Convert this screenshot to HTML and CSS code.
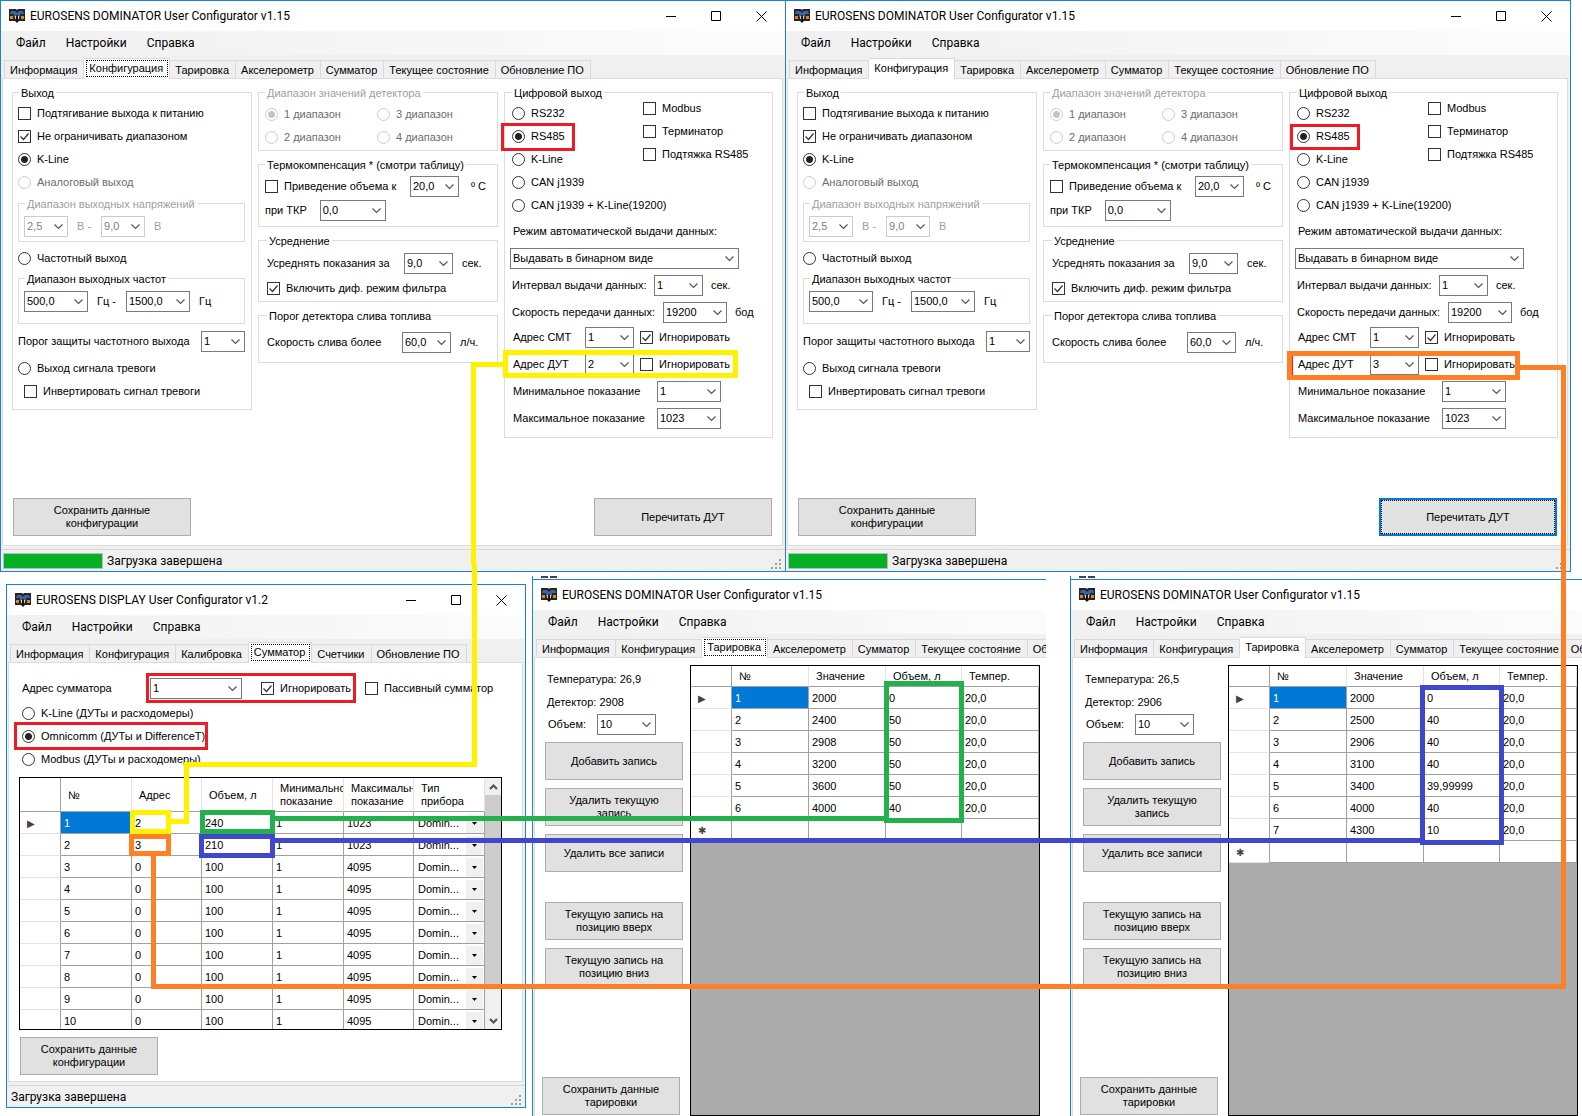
FILE: index.html
```html
<!DOCTYPE html>
<html lang="ru">
<head>
<meta charset="utf-8">
<title>EUROSENS User Configurator</title>
<link rel="stylesheet" href="styles.css">
</head>
<body>
<svg class="defs" aria-hidden="true">
  <symbol id="app" viewBox="0 0 16 14">
    <path d="M0 0h7l1 1 1-1h7v12h-6l-2 2-2-2H0z" fill="#2b2224"/>
    <path d="M2 2h4l2 2 2-2h4l1 3h-4v3H9V6H7v2H5V5H1z" fill="#3569a5"/>
    <path d="M1 7h3v3H1zM12 7h3v3h-3z" fill="#d8852f"/>
    <path d="M6 7h1v3H6zM9 7h1v3H9z" fill="#e8cfa4"/>
    <path d="M7 8h2v5H7z" fill="#17121a"/>
  </symbol>
  <symbol id="min" viewBox="0 0 11 11"><path d="M0 5.500h10" stroke="#000"/></symbol>
  <symbol id="max" viewBox="0 0 11 11"><path d="M.5.5h9v9h-9z" fill="none" stroke="#000"/></symbol>
  <symbol id="close" viewBox="0 0 11 11"><path d="M.5.5l10 10M10.500.5l-10 10" stroke="#000"/></symbol>
  <symbol id="grip" viewBox="0 0 11 11"><path d="M8 0h2v2H8zM8 4h2v2H8zM4 4h2v2H4zM8 8h2v2H8zM4 8h2v2H4zM0 8h2v2H0z" fill="#a0a0a0"/></symbol>
</svg>

<main class="desktop">

<section class="window win-a">
  <header class="title"><svg class="app-icon"><use href="#app"/></svg><h1>EUROSENS DOMINATOR User Configurator v1.15</h1>
    <div class="controls"><button aria-label="Свернуть"><svg><use href="#min"/></svg></button><button aria-label="Развернуть"><svg><use href="#max"/></svg></button><button aria-label="Закрыть"><svg><use href="#close"/></svg></button></div></header>
  <nav class="menu"><button>Файл</button><button>Настройки</button><button>Справка</button></nav>
  <div class="tabs" role="tablist"><button role="tab">Информация</button><button role="tab" class="active focus">Конфигурация</button><button role="tab">Тарировка</button><button role="tab">Акселерометр</button><button role="tab">Сумматор</button><button role="tab">Текущее состояние</button><button role="tab">Обновление ПО</button></div>
  <div class="panel config">
    <div class="columns">
      <fieldset class="output"><legend>Выход</legend>
        <label class="row"><input type="checkbox">Подтягивание выхода к питанию</label>
        <label class="row"><input type="checkbox" checked>Не ограничивать диапазоном</label>
        <label class="row"><input type="radio" name="a-out" checked>K-Line</label>
        <label class="row dim"><input type="radio" name="a-out" disabled>Аналоговый выход</label>
        <fieldset class="volts" disabled><legend>Диапазон выходных напряжений</legend>
          <label><select class="w44"><option>2,5</option></select>В -</label><label><select class="w44"><option>9,0</option></select>В</label></fieldset>
        <label class="row freq-row"><input type="radio" name="a-out">Частотный выход</label>
        <fieldset class="freqs"><legend>Диапазон выходных частот</legend>
          <label><select class="w64"><option>500,0</option></select>Гц -</label><label><select class="w64"><option>1500,0</option></select>Гц</label></fieldset>
        <label class="field spread"><span>Порог защиты частотного выхода</span><select class="w44"><option>1</option></select></label>
        <label class="row alarm"><input type="radio" name="a-out">Выход сигнала тревоги</label>
        <label class="row indent"><input type="checkbox">Инвертировать сигнал тревоги</label>
      </fieldset>
      <div class="middle">
        <fieldset class="ranges" disabled><legend>Диапазон значений детектора</legend>
          <label class="row"><input type="radio" name="a-range" checked>1 диапазон</label><label class="row"><input type="radio" name="a-range">3 диапазон</label>
          <label class="row"><input type="radio" name="a-range">2 диапазон</label><label class="row"><input type="radio" name="a-range">4 диапазон</label></fieldset>
        <fieldset class="thermo"><legend>Термокомпенсация * (смотри таблицу)</legend>
          <div class="field"><label class="row lead"><input type="checkbox">Приведение объема к</label><label class="unit"><select class="w48"><option>20,0</option></select>º C</label></div>
          <label class="field tkr"><span>при ТКР</span><select class="w66"><option>0,0</option></select></label></fieldset>
        <fieldset class="average"><legend>Усреднение</legend>
          <label class="field unit"><span>Усреднять показания за</span><select class="w48"><option>9,0</option></select>сек.</label>
          <label class="row"><input type="checkbox" checked>Включить диф. режим фильтра</label></fieldset>
        <fieldset class="drain"><legend>Порог детектора слива топлива</legend>
          <label class="field unit"><span>Скорость слива более</span><select class="w48"><option>60,0</option></select>л/ч.</label></fieldset>
      </div>
      <fieldset class="digital"><legend>Цифровой выход</legend>
        <div class="modes">
          <div class="radios"><label class="row"><input type="radio" name="a-dig">RS232</label><label class="row"><input type="radio" name="a-dig" checked>RS485</label><label class="row"><input type="radio" name="a-dig">K-Line</label><label class="row"><input type="radio" name="a-dig">CAN j1939</label><label class="row"><input type="radio" name="a-dig">CAN j1939 + K-Line(19200)</label></div>
          <div class="checks"><label class="row"><input type="checkbox">Modbus</label><label class="row"><input type="checkbox">Терминатор</label><label class="row"><input type="checkbox">Подтяжка RS485</label></div>
        </div>
        <label class="mode"><span>Режим автоматической выдачи данных:</span><select><option>Выдавать в бинарном виде</option></select></label>
        <label class="field c142"><span>Интервал выдачи данных:</span><select class="w48"><option>1</option></select>сек.</label>
        <label class="field c150"><span>Скорость передачи данных:</span><select class="w64"><option>19200</option></select>бод</label>
        <div class="field c72 smt"><label><span>Адрес СМТ</span><select class="w48"><option>1</option></select></label><label class="row"><input type="checkbox" checked>Игнорировать</label></div>
        <div class="field c72"><label><span>Адрес ДУТ</span><select class="w48"><option>2</option></select></label><label class="row"><input type="checkbox">Игнорировать</label></div>
        <label class="field c144"><span>Минимальное показание</span><select class="w64"><option>1</option></select></label>
        <label class="field c144"><span>Максимальное показание</span><select class="w64"><option>1023</option></select></label>
      </fieldset>
    </div>
    <div class="actions"><button class="btn wide">Сохранить данные<br>конфигурации</button><button class="btn wide">Перечитать ДУТ</button></div>
  </div>
  <footer class="status"><progress value="100" max="100" aria-label="Загрузка"></progress><span>Загрузка завершена</span><svg class="grip"><use href="#grip"/></svg></footer>
</section>

<section class="window win-b">
  <header class="title"><svg class="app-icon"><use href="#app"/></svg><h1>EUROSENS DOMINATOR User Configurator v1.15</h1>
    <div class="controls"><button aria-label="Свернуть"><svg><use href="#min"/></svg></button><button aria-label="Развернуть"><svg><use href="#max"/></svg></button><button aria-label="Закрыть"><svg><use href="#close"/></svg></button></div></header>
  <nav class="menu"><button>Файл</button><button>Настройки</button><button>Справка</button></nav>
  <div class="tabs" role="tablist"><button role="tab">Информация</button><button role="tab" class="active">Конфигурация</button><button role="tab">Тарировка</button><button role="tab">Акселерометр</button><button role="tab">Сумматор</button><button role="tab">Текущее состояние</button><button role="tab">Обновление ПО</button></div>
  <div class="panel config">
    <div class="columns">
      <fieldset class="output"><legend>Выход</legend>
        <label class="row"><input type="checkbox">Подтягивание выхода к питанию</label>
        <label class="row"><input type="checkbox" checked>Не ограничивать диапазоном</label>
        <label class="row"><input type="radio" name="b-out" checked>K-Line</label>
        <label class="row dim"><input type="radio" name="b-out" disabled>Аналоговый выход</label>
        <fieldset class="volts" disabled><legend>Диапазон выходных напряжений</legend>
          <label><select class="w44"><option>2,5</option></select>В -</label><label><select class="w44"><option>9,0</option></select>В</label></fieldset>
        <label class="row freq-row"><input type="radio" name="b-out">Частотный выход</label>
        <fieldset class="freqs"><legend>Диапазон выходных частот</legend>
          <label><select class="w64"><option>500,0</option></select>Гц -</label><label><select class="w64"><option>1500,0</option></select>Гц</label></fieldset>
        <label class="field spread"><span>Порог защиты частотного выхода</span><select class="w44"><option>1</option></select></label>
        <label class="row alarm"><input type="radio" name="b-out">Выход сигнала тревоги</label>
        <label class="row indent"><input type="checkbox">Инвертировать сигнал тревоги</label>
      </fieldset>
      <div class="middle">
        <fieldset class="ranges" disabled><legend>Диапазон значений детектора</legend>
          <label class="row"><input type="radio" name="b-range" checked>1 диапазон</label><label class="row"><input type="radio" name="b-range">3 диапазон</label>
          <label class="row"><input type="radio" name="b-range">2 диапазон</label><label class="row"><input type="radio" name="b-range">4 диапазон</label></fieldset>
        <fieldset class="thermo"><legend>Термокомпенсация * (смотри таблицу)</legend>
          <div class="field"><label class="row lead"><input type="checkbox">Приведение объема к</label><label class="unit"><select class="w48"><option>20,0</option></select>º C</label></div>
          <label class="field tkr"><span>при ТКР</span><select class="w66"><option>0,0</option></select></label></fieldset>
        <fieldset class="average"><legend>Усреднение</legend>
          <label class="field unit"><span>Усреднять показания за</span><select class="w48"><option>9,0</option></select>сек.</label>
          <label class="row"><input type="checkbox" checked>Включить диф. режим фильтра</label></fieldset>
        <fieldset class="drain"><legend>Порог детектора слива топлива</legend>
          <label class="field unit"><span>Скорость слива более</span><select class="w48"><option>60,0</option></select>л/ч.</label></fieldset>
      </div>
      <fieldset class="digital"><legend>Цифровой выход</legend>
        <div class="modes">
          <div class="radios"><label class="row"><input type="radio" name="b-dig">RS232</label><label class="row"><input type="radio" name="b-dig" checked>RS485</label><label class="row"><input type="radio" name="b-dig">K-Line</label><label class="row"><input type="radio" name="b-dig">CAN j1939</label><label class="row"><input type="radio" name="b-dig">CAN j1939 + K-Line(19200)</label></div>
          <div class="checks"><label class="row"><input type="checkbox">Modbus</label><label class="row"><input type="checkbox">Терминатор</label><label class="row"><input type="checkbox">Подтяжка RS485</label></div>
        </div>
        <label class="mode"><span>Режим автоматической выдачи данных:</span><select><option>Выдавать в бинарном виде</option></select></label>
        <label class="field c142"><span>Интервал выдачи данных:</span><select class="w48"><option>1</option></select>сек.</label>
        <label class="field c150"><span>Скорость передачи данных:</span><select class="w64"><option>19200</option></select>бод</label>
        <div class="field c72 smt"><label><span>Адрес СМТ</span><select class="w48"><option>1</option></select></label><label class="row"><input type="checkbox" checked>Игнорировать</label></div>
        <div class="field c72"><label><span>Адрес ДУТ</span><select class="w48"><option>3</option></select></label><label class="row"><input type="checkbox">Игнорировать</label></div>
        <label class="field c144"><span>Минимальное показание</span><select class="w64"><option>1</option></select></label>
        <label class="field c144"><span>Максимальное показание</span><select class="w64"><option>1023</option></select></label>
      </fieldset>
    </div>
    <div class="actions"><button class="btn wide">Сохранить данные<br>конфигурации</button><button class="btn wide default">Перечитать ДУТ</button></div>
  </div>
  <footer class="status"><progress value="100" max="100" aria-label="Загрузка"></progress><span>Загрузка завершена</span><svg class="grip"><use href="#grip"/></svg></footer>
</section>

<section class="window win-c">
  <header class="title"><svg class="app-icon"><use href="#app"/></svg><h1>EUROSENS DISPLAY User Configurator v1.2</h1>
    <div class="controls"><button aria-label="Свернуть"><svg><use href="#min"/></svg></button><button aria-label="Развернуть"><svg><use href="#max"/></svg></button><button aria-label="Закрыть"><svg><use href="#close"/></svg></button></div></header>
  <nav class="menu"><button>Файл</button><button>Настройки</button><button>Справка</button></nav>
  <div class="tabs" role="tablist"><button role="tab">Информация</button><button role="tab">Конфигурация</button><button role="tab">Калибровка</button><button role="tab" class="active focus">Сумматор</button><button role="tab">Счетчики</button><button role="tab">Обновление ПО</button></div>
  <div class="panel summator">
    <div class="field address"><label><span>Адрес сумматора</span><select class="w92"><option>1</option></select></label><label class="row ignore"><input type="checkbox" checked>Игнорировать</label><label class="row"><input type="checkbox">Пассивный сумматор</label></div>
    <div class="protocols">
      <label class="row"><input type="radio" name="c-proto">K-Line (ДУТы и расходомеры)</label>
      <label class="row"><input type="radio" name="c-proto" checked>Omnicomm (ДУТы и DifferenceT)</label>
      <label class="row"><input type="radio" name="c-proto">Modbus (ДУТы и расходомеры)</label>
    </div>
    <div class="grid scrolled">
      <table class="sensors">
        <colgroup><col class="c41"><col class="c71"><col class="c70"><col class="c71"><col class="c71"><col class="c70"><col class="c71"></colgroup>
        <thead><tr><th></th><th>№</th><th>Адрес</th><th>Объем, л</th><th>Минимальное показание</th><th>Максимальное показание</th><th>Тип<br>прибора</th></tr></thead>
        <tbody>
          <tr><td class="mark">▶</td><td class="sel">1</td><td>2</td><td>240</td><td>1</td><td>1023</td><td><select aria-label="Тип прибора 1"><option>Domin...</option></select></td></tr>
          <tr><td></td><td>2</td><td>3</td><td>210</td><td>1</td><td>1023</td><td><select aria-label="Тип прибора 2"><option>Domin...</option></select></td></tr>
          <tr><td></td><td>3</td><td>0</td><td>100</td><td>1</td><td>4095</td><td><select aria-label="Тип прибора 3"><option>Domin...</option></select></td></tr>
          <tr><td></td><td>4</td><td>0</td><td>100</td><td>1</td><td>4095</td><td><select aria-label="Тип прибора 4"><option>Domin...</option></select></td></tr>
          <tr><td></td><td>5</td><td>0</td><td>100</td><td>1</td><td>4095</td><td><select aria-label="Тип прибора 5"><option>Domin...</option></select></td></tr>
          <tr><td></td><td>6</td><td>0</td><td>100</td><td>1</td><td>4095</td><td><select aria-label="Тип прибора 6"><option>Domin...</option></select></td></tr>
          <tr><td></td><td>7</td><td>0</td><td>100</td><td>1</td><td>4095</td><td><select aria-label="Тип прибора 7"><option>Domin...</option></select></td></tr>
          <tr><td></td><td>8</td><td>0</td><td>100</td><td>1</td><td>4095</td><td><select aria-label="Тип прибора 8"><option>Domin...</option></select></td></tr>
          <tr><td></td><td>9</td><td>0</td><td>100</td><td>1</td><td>4095</td><td><select aria-label="Тип прибора 9"><option>Domin...</option></select></td></tr>
          <tr><td></td><td>10</td><td>0</td><td>100</td><td>1</td><td>4095</td><td><select aria-label="Тип прибора 10"><option>Domin...</option></select></td></tr>
        </tbody>
      </table>
      <div class="scrollbar"><button aria-label="Вверх"><svg viewBox="0 0 9 6"><path d="M1 5l3.500-3.500L8 5" fill="none" stroke="#505050" stroke-width="2"/></svg></button><div class="thumb"></div><button aria-label="Вниз"><svg viewBox="0 0 9 6"><path d="M1 1l3.500 3.500L8 1" fill="none" stroke="#505050" stroke-width="2"/></svg></button></div>
    </div>
    <button class="btn">Сохранить данные<br>конфигурации</button>
  </div>
  <footer class="status"><span>Загрузка завершена</span><svg class="grip"><use href="#grip"/></svg></footer>
</section>

<div class="sliver sliver-d"><svg viewBox="0 0 16 2"><path d="M0 0h7v2H0zM9 0h7v2H9z" fill="#4a4044"/></svg></div>
<section class="window clipped win-d">
  <header class="title"><svg class="app-icon"><use href="#app"/></svg><h1>EUROSENS DOMINATOR User Configurator v1.15</h1></header>
  <nav class="menu"><button>Файл</button><button>Настройки</button><button>Справка</button></nav>
  <div class="tabs" role="tablist"><button role="tab">Информация</button><button role="tab">Конфигурация</button><button role="tab" class="active focus">Тарировка</button><button role="tab">Акселерометр</button><button role="tab">Сумматор</button><button role="tab">Текущее состояние</button><button role="tab">Обновление ПО</button></div>
  <div class="panel calibration">
    <div class="sidebar">
      <p class="row">Температура: 26,9</p>
      <p class="row">Детектор: 2908</p>
      <label class="field volume"><span>Объем:</span><select class="w59"><option>10</option></select></label>
      <div class="stack"><button class="btn">Добавить запись</button><button class="btn">Удалить текущую<br>запись</button><button class="btn">Удалить все записи</button></div>
      <div class="stack moves"><button class="btn">Текущую запись на<br>позицию вверх</button><button class="btn">Текущую запись на<br>позицию вниз</button></div>
      <button class="btn save">Сохранить данные<br>тарировки</button>
    </div>
    <div class="grid">
      <table class="points">
        <colgroup><col class="c41"><col class="c77"><col class="c77"><col class="c76"><col class="c77"></colgroup>
        <thead><tr><th></th><th>№</th><th>Значение</th><th>Объем, л</th><th>Темпер.</th></tr></thead>
        <tbody>
          <tr><td class="mark">▶</td><td class="sel">1</td><td>2000</td><td>0</td><td>20,0</td></tr>
          <tr><td></td><td>2</td><td>2400</td><td>50</td><td>20,0</td></tr>
          <tr><td></td><td>3</td><td>2908</td><td>50</td><td>20,0</td></tr>
          <tr><td></td><td>4</td><td>3200</td><td>50</td><td>20,0</td></tr>
          <tr><td></td><td>5</td><td>3600</td><td>50</td><td>20,0</td></tr>
          <tr><td></td><td>6</td><td>4000</td><td>40</td><td>20,0</td></tr>
          <tr><td class="mark">✱</td><td></td><td></td><td></td><td></td></tr>
        </tbody>
      </table>
    </div>
  </div>
</section>

<div class="sliver sliver-e"><svg viewBox="0 0 16 2"><path d="M0 0h7v2H0zM9 0h7v2H9z" fill="#4a4044"/></svg></div>
<section class="window clipped win-e">
  <header class="title"><svg class="app-icon"><use href="#app"/></svg><h1>EUROSENS DOMINATOR User Configurator v1.15</h1></header>
  <nav class="menu"><button>Файл</button><button>Настройки</button><button>Справка</button></nav>
  <div class="tabs" role="tablist"><button role="tab">Информация</button><button role="tab">Конфигурация</button><button role="tab" class="active">Тарировка</button><button role="tab">Акселерометр</button><button role="tab">Сумматор</button><button role="tab">Текущее состояние</button><button role="tab">Обновление ПО</button></div>
  <div class="panel calibration">
    <div class="sidebar">
      <p class="row">Температура: 26,5</p>
      <p class="row">Детектор: 2906</p>
      <label class="field volume"><span>Объем:</span><select class="w59"><option>10</option></select></label>
      <div class="stack"><button class="btn">Добавить запись</button><button class="btn">Удалить текущую<br>запись</button><button class="btn">Удалить все записи</button></div>
      <div class="stack moves"><button class="btn">Текущую запись на<br>позицию вверх</button><button class="btn">Текущую запись на<br>позицию вниз</button></div>
      <button class="btn save">Сохранить данные<br>тарировки</button>
    </div>
    <div class="grid">
      <table class="points">
        <colgroup><col class="c41"><col class="c77"><col class="c77"><col class="c76"><col class="c77"></colgroup>
        <thead><tr><th></th><th>№</th><th>Значение</th><th>Объем, л</th><th>Темпер.</th></tr></thead>
        <tbody>
          <tr><td class="mark">▶</td><td class="sel">1</td><td>2000</td><td>0</td><td>20,0</td></tr>
          <tr><td></td><td>2</td><td>2500</td><td>40</td><td>20,0</td></tr>
          <tr><td></td><td>3</td><td>2906</td><td>40</td><td>20,0</td></tr>
          <tr><td></td><td>4</td><td>3100</td><td>40</td><td>20,0</td></tr>
          <tr><td></td><td>5</td><td>3400</td><td>39,99999</td><td>20,0</td></tr>
          <tr><td></td><td>6</td><td>4000</td><td>40</td><td>20,0</td></tr>
          <tr><td></td><td>7</td><td>4300</td><td>10</td><td>20,0</td></tr>
          <tr><td class="mark">✱</td><td></td><td></td><td></td><td></td></tr>
        </tbody>
      </table>
    </div>
  </div>
</section>

<!-- Links between related settings of the five windows -->
<svg class="links" width="1582" height="1116" viewBox="0 0 1582 1116" fill="none" shape-rendering="crispEdges" aria-hidden="true">
  <g stroke="#ed1c24" stroke-width="3">
    <path d="M502.500 124.500h71v25h-71zM1291.500 125.500h67v23h-67zM147.500 674.500h207v27h-207zM15.500 723.500h191v25h-191z"/>
    <path d="M1292.500 356v19" stroke-width="1"/>
  </g>
  <g stroke="#fff200" stroke-width="5">
    <path d="M505.500 352.500h230v23h-230zM132.500 812.500h36v19h-36z"/>
    <path d="M503 364.500H473.500V565M474.500 565V764.500H186.500V821.500H171"/>
  </g>
  <g stroke="#22b14c" stroke-width="5">
    <path d="M202.500 812.500h70v19h-70zM886.500 683.500h75v137h-75zM275 818.500h609"/>
  </g>
  <g stroke="#3f48cc" stroke-width="5">
    <path d="M201.500 836.500h71v19h-71zM1422.500 687.500h79v155h-79zM275 840.500h1145"/>
  </g>
  <g stroke="#ff7f27" stroke-width="5">
    <path d="M131.500 836.500h37v17h-37zM1289.500 353.500h228v24h-228z"/>
    <path d="M1520 367.500H1563.500V986.500H153.500V856"/>
  </g>
</svg>
</main>
</body>
</html>
```
FILE: styles.css
```css
* { box-sizing: border-box; }

body {
  margin: 0;
  background: #fff;
  color: #000;
  font: 11px/13px "Liberation Sans", Arial, sans-serif;
}

button, select, input { font: inherit; color: inherit; margin: 0; }
p { margin: 0; }
.defs { position: absolute; width: 0; height: 0; }

.desktop { position: relative; min-height: 1116px; overflow: hidden; }

/* Windows */
.window {
  position: absolute;
  display: flex;
  flex-direction: column;
  border: 1px solid #1883d7;
  background: #f0f0f0;
}
.win-a { left: 0; top: 0; width: 786px; height: 572px; }
.win-b { left: 785px; top: 0; width: 786px; height: 572px; }
.win-c { left: 6px; top: 584px; width: 520px; height: 524px; }
.win-d { left: 532px; top: 579px; width: 514px; bottom: 0; }
.win-e { left: 1070px; top: 579px; right: 0; bottom: 0; }
.clipped { border-right: 0; border-bottom: 0; overflow: hidden; }
.sliver { position: absolute; top: 576px; height: 3px; padding-left: 8px; border-left: 1px solid #1883d7; }
.sliver svg { display: block; width: 16px; height: 2px; }
.sliver-d { left: 532px; }
.sliver-e { left: 1070px; }

.title {
  display: flex;
  align-items: center;
  flex: none;
  height: 30px;
  padding: 0 10px 0 8px;
  background: #fff;
}
.app-icon { width: 16px; height: 14px; margin-right: 5px; }
.title h1 { margin: 0; font: 12px/16px Roboto, "Open Sans", sans-serif; white-space: nowrap; }
.controls { display: flex; margin-left: auto; }
.controls button { display: grid; place-items: center; width: 45px; height: 28px; padding: 0; border: 0; background: none; }
.controls button:last-child { width: 28px; margin-left: 8px; }
.controls svg { width: 11px; height: 11px; }

.menu {
  display: flex;
  align-items: center;
  flex: none;
  gap: 20px;
  height: 24px;
  padding-left: 15px;
  background: linear-gradient(90deg, #f0f0f0, #fcfcfc);
}
.menu button { padding: 0; border: 0; background: none; font: 12px/16px Roboto, "Open Sans", sans-serif; }

.tabs { display: flex; align-items: flex-end; flex: none; height: 23px; padding-left: 3px; }
.tabs button {
  flex: none;
  height: 18px;
  padding: 1px 6px 0 5px;
  border: 1px solid #d9d9d9;
  border-bottom: 0;
  border-left-width: 0;
  background: #f0f0f0;
  white-space: nowrap;
}
.tabs button:first-child { border-left-width: 1px; }
.tabs .active {
  position: relative;
  height: 21px;
  margin-bottom: -1px;
  padding-bottom: 3px;
  background: #fff;
}
.tabs .focus { outline: 1px dotted #000; outline-offset: -3px; }

.panel {
  display: flex;
  flex-direction: column;
  flex: 1;
  min-height: 0;
  margin: 0 2px 3px 1px;
  border: 1px solid #dcdcdc;
  background: #fff;
}

.status {
  display: flex;
  align-items: center;
  flex: none;
  height: 22px;
  padding: 0 3px 0 2px;
  border-top: 1px solid #d7d7d7;
  font: 12px/16px Roboto, "Open Sans", sans-serif;
}
.status span { padding-left: 4px; }
.status progress { appearance: none; width: 100px; height: 16px; border: 1px solid #bcbcbc; }
.status progress::-webkit-progress-bar { background: #e6e6e6; }
.status progress::-webkit-progress-value { background: #06b025; }
.grip { width: 11px; height: 11px; margin: 7px 0 0 auto; }
.win-c .status { padding-left: 0; }

/* Controls */
fieldset { min-width: 0; margin: 0; padding: 0; border: 1px solid #dcdcdc; }
legend { margin-left: 1px; padding: 1px 2px 0; line-height: 12px; }
.middle legend, .digital legend { margin-left: 0; }
fieldset:disabled > legend, fieldset:disabled label, .dim { color: #a0a0a0; }
.ranges:disabled label, .dim { color: #6d6d6d; }

.row { display: flex; align-items: center; height: 23px; white-space: nowrap; }
.field { display: flex; align-items: center; height: 21px; white-space: nowrap; }
.field label { display: flex; align-items: center; }
.field span { flex: none; }

input[type="checkbox"], input[type="radio"] {
  appearance: none;
  flex: none;
  width: 13px;
  height: 13px;
  margin-right: 6px;
  border: 1px solid #333;
  background: #fff;
}
input[type="radio"] { border-radius: 50%; }
input[type="radio"]:checked { background: radial-gradient(circle, #222 0 3px, #fff 4px); }
input[type="checkbox"]:checked {
  background: url("data:image/svg+xml,%3Csvg xmlns='http://www.w3.org/2000/svg' viewBox='0 0 11 11'%3E%3Cpath d='M1.500 5.500l3 3 5-6' fill='none' stroke='%23333' stroke-width='1.200'/%3E%3C/svg%3E");
}
input:disabled { border-color: #ccc; }
input[type="radio"]:disabled:checked { background: radial-gradient(circle, #c4c4c4 0 3px, #fff 4px); }

select {
  appearance: none;
  flex: none;
  height: 21px;
  padding: 0 18px 1px 2px;
  border: 1px solid #7a7a7a;
  border-radius: 0;
  background: #fff url("data:image/svg+xml,%3Csvg xmlns='http://www.w3.org/2000/svg' width='9' height='6'%3E%3Cpath d='M.5.5l4 4 4-4' fill='none' stroke='%23555' stroke-width='1.200'/%3E%3C/svg%3E") no-repeat right 4px center;
}
select:disabled { border-color: #ccc; color: #808080; opacity: 1; }
.w44 { width: 44px; }
.w48 { width: 49px; }
.w59 { width: 59px; }
.w64 { width: 64px; }
.w66 { width: 66px; }
.w92 { width: 92px; }

.btn {
  flex: none;
  width: 138px;
  height: 38px;
  padding: 0;
  border: 1px solid #adadad;
  background: #e1e1e1;
  text-align: center;
}
.btn.wide { width: 178px; }
.btn.default { border: 2px solid #0078d7; outline: 1px dotted #000; outline-offset: -3px; }

/* Configuration tab */
.config { padding: 7px 9px 9px 9px; }
.columns { display: grid; grid-template-columns: 240fr 240fr 269fr; gap: 6px; align-items: start; }
.actions { display: flex; justify-content: space-between; margin-top: auto; padding: 0 1px; }

.output { padding: 3px 6px 6px 5px; }
.volts, .freqs { display: flex; gap: 10px; }
.volts label, .freqs label { display: flex; align-items: center; gap: 9px; }
.volts { margin-top: 3px; padding: 6px 5px 4px; }
.freq-row { margin-top: 5px; }
.freqs { margin-top: 2px; padding: 6px 5px 11px; }
.spread { justify-content: space-between; margin-top: 7px; }
.alarm { margin-top: 5px; }
.indent { padding-left: 6px; }

.middle { display: flex; flex-direction: column; gap: 7px; }
.ranges { display: grid; grid-template-columns: 112px 1fr; padding: 4px 6px 1px; }
.thermo { padding: 5px 6px; }
.thermo .lead { width: 145px; }
.thermo .unit { gap: 12px; }
.tkr { gap: 13px; margin-top: 3px; }
.average { padding: 6px 8px 1px; }
.average .row { margin-top: 3px; }
.average .unit span { width: 137px; }
.average select, .drain select { margin-right: 9px; }
.drain { padding: 10px 8px 9px; }
.drain .unit span { width: 135px; }

.digital { padding: 0 6px 8px 7px; }
.modes { display: grid; grid-template-columns: 131px 1fr; height: 118px; }
.radios { padding-top: 3px; }
.checks { margin-top: -2px; }
.mode { display: block; }
.mode span { display: block; margin: 8px 0 10px; padding-left: 1px; }
.mode select { display: block; width: 229px; margin-left: -2px; }
.digital .field { margin-top: 6px; }
.digital .field.smt { margin-top: 4px; }
.digital .field > select { margin-right: 8px; }
.c142 span { width: 142px; }
.c150 span { width: 151px; }
.c72 span { width: 73px; padding-left: 1px; }
.c72 select { margin-right: 6px; }
.c144 span { width: 145px; padding-left: 1px; }

/* Summator tab */
.summator { padding: 15px 20px 6px 10px; }
.address { padding-left: 3px; }
.address span { width: 128px; }
.address select { margin-right: 19px; }
.ignore { width: 104px; }
.protocols { margin: 3px 0 6px 3px; }
.summator .btn { margin: 7px 0 0 1px; }

/* Data grids */
.grid { flex: 1; min-height: 0; overflow: hidden; border: 1px solid #000; background: #ababab; }
.scrolled { display: flex; background: #fff; }
table { flex: none; table-layout: fixed; border-spacing: 0; background: #fff; }
.sensors { width: 465px; }
.points { width: 348px; }
.c41 { width: 41px; }
.c70 { width: 70px; }
.c71 { width: 71px; }
.c76 { width: 76px; }
.c77 { width: 77px; }
th, td { height: 22px; padding: 1px 0 0 3px; overflow: hidden; border: solid #a0a0a0; border-width: 0 1px 1px 0; text-align: left; white-space: nowrap; }
th { padding: 1px 5px 0 7px; border-right-color: #e3e3e3; font-weight: normal; }
thead tr { height: 21px; }
.points th { height: 21px; }
.sensors th { height: 34px; white-space: normal; }
th:first-child { border-right-color: #a0a0a0; }
td:first-child { border-bottom-color: #e3e3e3; }
td.mark { padding-left: 7px; color: #4a4044; font: 10px/13px "DejaVu Sans", sans-serif; }
td.sel { background: #0078d7; color: #fff; }
td select {
  display: block;
  width: 66px;
  height: 19px;
  padding: 0 17px 0 1px;
  border: 0;
  background:
    url("data:image/svg+xml,%3Csvg xmlns='http://www.w3.org/2000/svg' width='5' height='3'%3E%3Cpath d='M0 0h5L2.500 3z'/%3E%3C/svg%3E") no-repeat right 6px center,
    linear-gradient(#f0f0f0, #f0f0f0) no-repeat right / 17px 100%;
}

.scrollbar { display: flex; flex-direction: column; flex: 1; background: #f0f0f0; }
.scrollbar button { display: grid; place-items: center; height: 17px; padding: 0; border: 0; background: none; }
.scrollbar svg { width: 9px; height: 6px; }
.thumb { height: 190px; margin-bottom: auto; background: #cdcdcd; }

/* Calibration tab */
.calibration { flex-direction: row; gap: 7px; margin: 0; padding: 7px 0 0 7px; border-width: 1px 0 0 1px; }
.clipped .calibration { margin-left: 1px; }
.sidebar { display: flex; flex-direction: column; width: 141px; padding: 3px 0 1px 3px; }
.sidebar .row { padding-left: 2px; }
.volume span { width: 52px; padding-left: 3px; }
.stack { display: flex; flex-direction: column; gap: 8px; margin-top: 7px; }
.stack.moves { margin-top: 30px; }
.save { margin: auto 0 0 -3px; }
.calibration .grid { flex: none; width: 350px; }

.links { position: absolute; left: 0; top: 0; pointer-events: none; }
```
